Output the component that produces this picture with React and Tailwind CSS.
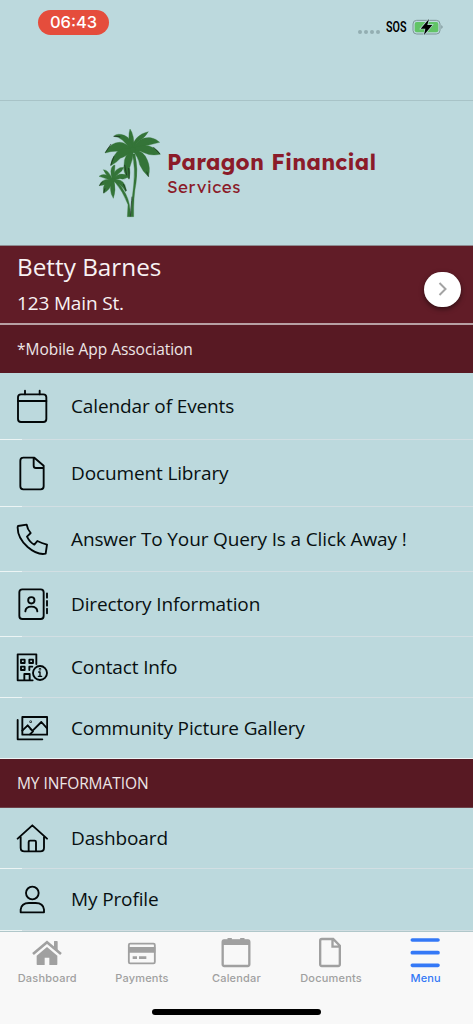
const rows = [
  { label: 'Calendar of Events', h: 'h-[67px]', icon: 'calendar' },
  { label: 'Document Library', h: 'h-[67px]', icon: 'document' },
  { label: 'Answer To Your Query Is a Click Away !', h: 'h-[65px]', icon: 'phone' },
  { label: 'Directory Information', h: 'h-[65px]', icon: 'directory' },
  { label: 'Contact Info', h: 'h-[61px]', icon: 'building' },
  { label: 'Community Picture Gallery', h: 'h-[61px]', icon: 'gallery', last: true },
];

const infoRows = [
  { label: 'Dashboard', h: 'h-[61px]', icon: 'home' },
  { label: 'My Profile', h: 'h-[62px] [&>div:first-child]:pb-[2px]', icon: 'profile' },
];

const rowIcons = {
  calendar: {
    box: '48 39 96 108',
    art: (
      <>
        <rect x="54" y="58" width="85" height="83" rx="9" />
        <path d="M54 78H139M75 47V58M119 47V58" />
      </>
    ),
  },
  document: {
    box: '48 240 96 108',
    art: <path d="M69 248H103L131 272V334Q131 343 122 343H70Q61 343 61 334V257Q61 248 70 248M101 248V272Q101 279 108 279H131" />,
  },
  phone: {
    box: '48 438 96 108',
    art: <path d="M54 453L80 449Q82 462 92 474L81 485Q90 503 103 509L112 498Q125 504 141 509L137 536Q112 541 83 516Q52 488 53 456Z" />,
  },
  directory: {
    box: '48 33 96 108',
    art: (
      <>
        <rect x="58" y="43" width="73" height="89" rx="9" />
        <circle cx="94" cy="76" r="9.5" />
        <path d="M76 109Q77 95 94 95Q111 95 112 109M141 55V68M141 78V92M141 101V115" />
      </>
    ),
  },
  building: {
    box: '48 222 96 108',
    art: (
      <>
        <path d="M98 316H53V238H109V267M73 315V297H89V315" />
        <path d="M63 254H74V264H63ZM88 254H99V264H88ZM63 275H74V285H63ZM97 275H88V285" />
        <circle cx="120" cy="294" r="21" />
        <path d="M116 291H120V303M115 304H125" strokeWidth="4" />
        <circle cx="120" cy="283" r="1" />
      </>
    ),
  },
  gallery: {
    box: '48 405 96 108',
    art: (
      <>
        <rect x="67" y="426" width="74.5" height="53" />
        <path d="M53 435V493H127M67 467L83 451L99 469L90 478M92 463L98 467L124 441L142 461" />
        <circle cx="92" cy="440" r="1" />
      </>
    ),
  },
  home: {
    box: '48 135 96 108',
    art: <path d="M53 191L97 151L141 191M62 185V218Q62 229 73 229H121Q132 229 132 218V185M86 229V201Q86 197 90 197H104Q108 197 108 201V229" />,
  },
  profile: {
    box: '48 318 96 108',
    art: (
      <>
        <circle cx="97" cy="354" r="19" />
        <path d="M62 412V404Q64 384 87 384H107Q130 384 132 404V412Z" />
      </>
    ),
  },
};

const tabs = [
  {
    label: 'Dashboard',
    box: '94 483 96 102',
    art: (
      <>
        <path d="M100 537L142 502L184 537" fill="none" stroke="currentColor" strokeWidth="8" />
        <path d="M163 499Q163 498 165 498H172Q174 498 174 500V526L163 516ZM111 542L142 516L173 542V568Q173 570 171 570H149V548H135V570H113Q111 570 111 568Z" fill="currentColor" />
      </>
    ),
  },
  {
    label: 'Payments',
    box: '378 483 96 102',
    art: (
      <>
        <rect x="386.5" y="506" width="78" height="59" rx="4" fill="none" stroke="currentColor" strokeWidth="5.5" />
        <path d="M385 516H466V533H385ZM398 544H411V552H398ZM417 544H439V552H417Z" fill="currentColor" />
      </>
    ),
  },
  {
    label: 'Calendar',
    box: '661.5 483 96 102',
    art: (
      <>
        <rect x="669.5" y="496" width="80" height="77" rx="5" fill="none" stroke="currentColor" strokeWidth="7" />
        <path d="M669 494H750V510H669ZM684 489H697V496H684ZM722 489H735V496H722Z" fill="currentColor" />
      </>
    ),
  },
  {
    label: 'Documents',
    box: '247.5 48 96 102',
    art: (
      <path d="M268 57H302L322 77V133Q322 138 317 138H268Q263 138 263 133V62Q263 57 268 57ZM300 57V80H322" fill="none" stroke="currentColor" strokeWidth="7" />
    ),
  },
  {
    label: 'Menu',
    box: '531 48 96 102',
    active: true,
    art: <path d="M538 60H615M538 98H615M538 136H615" fill="none" stroke="currentColor" strokeWidth="11" strokeLinecap="round" />,
  },
];

function MenuRow({ row }) {
  const icon = rowIcons[row.icon];
  return (
    <li className={`flex flex-col ${row.h}`}>
      <div className="flex h-[60px] grow items-center pl-4">
        <svg className="h-9 w-8 shrink-0" viewBox={icon.box} fill="none" stroke="#020708" strokeWidth="5.6" strokeLinecap="round" strokeLinejoin="round">
          {icon.art}
        </svg>
        <span className="ml-[23px] whitespace-nowrap text-[19px] leading-6 tracking-[-0.13px] text-[#081011]">{row.label}</span>
      </div>
      <div className="flex h-px">
        <div className="w-[22px] bg-[#edf5f5]" />
        <div className={row.last ? 'flex-1 bg-[#edf5f5]' : 'flex-1 bg-[#d2dfe3]'} />
      </div>
    </li>
  );
}

function PalmLogo() {
  return (
    <svg className="h-[90px] w-16" viewBox="24 24 192 270">
      <g fill="#347438" stroke="#347438" strokeWidth="1" strokeLinejoin="round">
        <path d="M127 102Q137 146 131 195Q125 240 122 290H131Q130 230 138 190Q145 148 135 102Z" />
        <path d="M74 185Q99 214 114 254L112 290H121Q122 250 107 221Q95 199 80 182Z" />
        <path d="M122 92Q112 50 120 27Q134 44 132 92Z" />
        <path d="M122 92Q98 50 71 49Q82 38 103 46Q125 54 130 90Z" />
        <path d="M123 90Q132 44 175 35Q164 54 148 62Q136 68 131 92Z" />
        <path d="M125 93Q143 50 182 53Q200 57 209 67Q185 73 163 79Q143 82 127 95Z" />
        <path d="M127 93Q105 59 76 69Q56 76 45 99Q66 92 85 94Q106 100 127 95Z" />
        <path d="M125 85Q165 69 190 83Q207 92 211 103Q182 108 164 99Q147 90 127 93Z" />
        <path d="M127 86Q88 80 74 105Q63 119 62 137Q80 128 91 115Q108 110 129 90Z" />
        <path d="M126 90Q101 105 102 135Q97 158 117 178Q122 157 119 143Q129 118 131 91Z" />
        <path d="M127 92Q146 111 149 134Q157 153 175 170Q183 145 172 120Q162 93 130 88Z" />
        <path d="M67 180Q57 148 69 137L75 135Q73 153 74 180Z" />
        <path d="M68 181Q57 149 40 149Q50 170 68 181Z" />
        <path d="M68 180Q67 152 90 143L101 142Q98 153 87 160Q79 166 72 180Z" />
        <path d="M70 178Q88 152 117 169Q103 181 91 176Q81 175 70 184Z" />
        <path d="M70 178Q43 155 27 169Q43 174 68 183Z" />
        <path d="M70 179Q35 172 28 197Q48 195 70 182Z" />
        <path d="M68 180Q34 185 41 220Q59 211 72 181Z" />
        <path d="M67 181Q54 209 70 235Q79 211 72 181Z" />
        <path d="M70 179Q104 173 109 210L107 215Q94 192 70 184Z" />
        <circle cx="128" cy="90" r="8" />
        <circle cx="70" cy="180" r="4" />
      </g>
      <path d="M121 290Q124 250 126 230M116 144L118 176M170 155L176 170M63 72L46 98M190 81L210 102M72 109L62 136M71 49L91 50M28 197L38 185M41 219L45 205M100 192L109 213M104 135L110 166" fill="none" stroke="#17251b" strokeWidth="2" />
    </svg>
  );
}

export default function App() {
  return (
    <div className="flex h-[1024px] w-[473px] flex-col overflow-hidden bg-[#bcd9dd] font-['Open_Sans',sans-serif]">
      <header className="flex h-[101px] items-start justify-between border-b border-[#a8c3c7] pl-[38px] pr-[30px]">
        <div className="mt-[10px] flex h-[25px] w-[71px] items-center justify-center rounded-full bg-[#e54d3c] font-['Inter',sans-serif] text-[16.5px] font-medium leading-none text-white">
          06:43
        </div>
        <div className="mt-[18px] flex h-[18px] items-center">
          <div className="mt-[10px] flex gap-[2px]">
            {[0, 1, 2, 3].map((dot) => (
              <div key={dot} className="size-1 rounded-full bg-[#93aeb2]" />
            ))}
          </div>
          <span className="ml-[6px] mt-[3px] w-[22px] origin-left scale-x-[0.74] font-['Roboto',sans-serif] text-[14.5px] font-semibold leading-none text-black">SOS</span>
          <svg className="ml-[4px] h-[18px] w-[31px]" viewBox="1235 54 93 54">
            <rect x="1238" y="61" width="81" height="41" rx="11" fill="none" stroke="#7f9698" strokeWidth="3" />
            <rect x="1243" y="66" width="71" height="31" rx="6" fill="#62c466" />
            <path d="M1323 75Q1331 81 1323 87Z" fill="#7f9698" />
            <path d="M1286 57L1261 86H1275L1271 105L1296 75H1281Z" fill="black" stroke="#bcd9dd" strokeWidth="4" paintOrder="stroke" />
          </svg>
        </div>
      </header>

      <section className="flex h-[144px] items-start pl-[98px] pt-[27px]">
        <PalmLogo />
        <div className="ml-[5px] mt-[20px] whitespace-nowrap font-['Lexend','Inter',sans-serif] text-[#8b1b29]">
          <h1 className="text-[22px] font-bold leading-7 tracking-[0.2px]">Paragon Financial</h1>
          <p className="text-[17px] leading-[22px] tracking-[0.5px]">Services</p>
        </div>
      </section>

      <section className="flex h-[80px] items-center justify-between border-b-2 border-t border-b-[#b7a0a4] border-t-[#8e8c91] bg-[#611c27] pl-[17px] pr-3 text-[#f8f2f3]">
        <div>
          <h2 className="text-[24.3px] leading-[32px]">Betty Barnes</h2>
          <p className="mt-[5px] text-[19px] leading-[30px] tracking-[-0.15px]">123 Main St.</p>
        </div>
        <button className="mt-[9px] flex h-[35px] w-[37px] items-center justify-center rounded-full bg-white shadow-[0_2px_5px_rgba(0,0,0,0.5)]" aria-label="Open account">
          <svg className="h-[14px] w-[9px]" viewBox="0 0 9 14" fill="none" stroke="#a3a3a3" strokeWidth="2">
            <path d="M1.5 1L7.5 7L1.5 13" />
          </svg>
        </button>
      </section>

      <div className="flex h-[48px] items-center bg-[#581923] pl-[17px] pt-px text-[15.5px] tracking-[-0.04px] text-[#eee6e7]">*Mobile App Association</div>

      <ul>
        {rows.map((row) => (
          <MenuRow key={row.label} row={row} />
        ))}
      </ul>

      <div className="flex h-[49px] items-center border-b border-[#6d4149] bg-[#581923] pl-[17px] pt-[2px] text-[15.5px] tracking-[-0.08px] text-[#eee6e7]">MY INFORMATION</div>

      <ul>
        {infoRows.map((row) => (
          <MenuRow key={row.label} row={row} />
        ))}
      </ul>

      <nav className="flex flex-1 flex-col items-center border-t border-[#b0c7ca] bg-[#f8f8f8]">
        <div className="flex h-[59px] w-full pt-1">
          {tabs.map((tab) => (
            <div key={tab.label} className={`flex flex-1 flex-col items-center ${tab.active ? 'text-[#3478f6]' : 'text-[#a0a0a0]'}`}>
              <svg className="h-[34px] w-8" viewBox={tab.box}>{tab.art}</svg>
              <span className="whitespace-nowrap font-['Inter',sans-serif] text-[11px] font-medium leading-4 tracking-[0.2px]">{tab.label}</span>
            </div>
          ))}
        </div>
        <div className="mt-[18px] h-[6px] w-[169px] rounded-full bg-black" />
      </nav>
    </div>
  );
}
